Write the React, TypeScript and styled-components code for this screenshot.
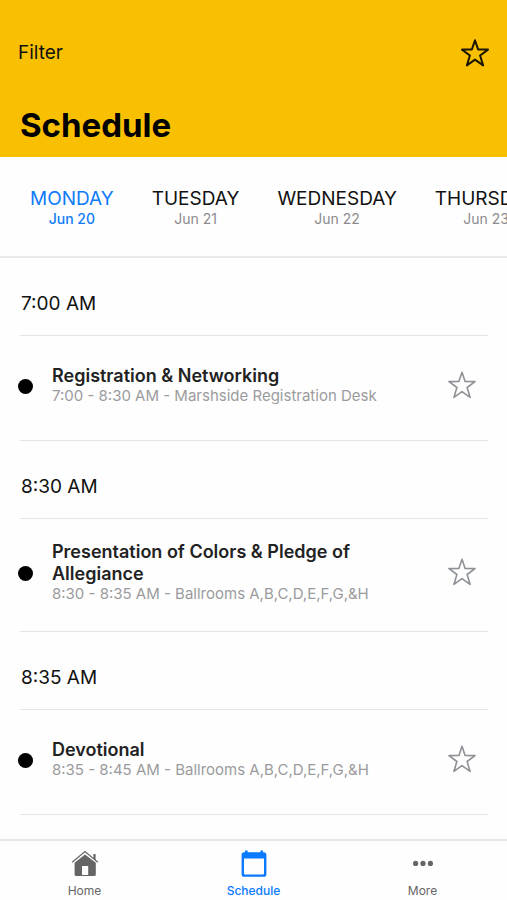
import React, { useState } from "react";
import styled, { createGlobalStyle } from "styled-components";

const GlobalStyle = createGlobalStyle`
  * { box-sizing: border-box; }
  body {
    margin: 0;
    background: #fefefe;
    color: #111;
    font-family: Inter, "Liberation Sans", sans-serif;
  }
  button { border: 0; padding: 0; background: none; color: inherit; font: inherit; cursor: pointer; }
  h1, h2, h3, p, ul { margin: 0; padding: 0; }
`;

const Page = styled.div`
  display: flex;
  flex-direction: column;
  height: 100vh;
`;

const Header = styled.header`
  flex: none;
  padding: 37px 18px 12px;
  background: #f9c002;
`;

const HeaderBar = styled.div`
  display: flex;
  align-items: center;
  justify-content: space-between;
  height: 32px;
`;

const FilterButton = styled.button`
  font-size: 19px;
  line-height: 24px;
`;

const PageTitle = styled.h1`
  margin: 36px 0 0 2px;
  font-size: 33px;
  line-height: 40px;
  font-weight: 700;
  color: #000;
`;

const IconButton = styled.button<{ $color: string }>`
  display: flex;
  flex: none;
  color: ${(p) => p.$color};
`;

const Days = styled.nav`
  display: flex;
  flex: none;
  gap: 38px;
  padding: 30px 30px 28px;
  border-bottom: 2px solid #e9e9ea;
  overflow: hidden;
`;

const DayButton = styled.button<{ $active: boolean }>`
  display: flex;
  flex: none;
  flex-direction: column;
  align-items: center;
  color: ${(p) => (p.$active ? "#0f7bf8" : "#111")};
`;

const DayName = styled.span`
  font-size: 19px;
  line-height: 23px;
`;

const DayDate = styled.span<{ $active: boolean }>`
  font-size: 14px;
  line-height: 18px;
  font-weight: ${(p) => (p.$active ? 500 : 400)};
  color: ${(p) => (p.$active ? "inherit" : "#8c8c8e")};
`;

const Agenda = styled.main`
  flex: 1;
  min-height: 0;
  padding: 0 19px 0 20px;
  overflow: hidden;
`;

const TimeHeading = styled.h2`
  padding: 34px 1px 19px;
  border-bottom: 1px solid #e4e4e5;
  font-size: 19px;
  line-height: 24px;
  font-weight: 400;
`;

const Session = styled.article`
  display: flex;
  align-items: center;
  min-height: 105px;
  padding: 22px 12px 28px 0;
  border-bottom: 1px solid #e4e4e5;
`;

const Dot = styled.span`
  flex: none;
  width: 15px;
  height: 15px;
  margin: 3px 19px 0 -2px;
  border-radius: 50%;
  background: #000;
`;

const SessionText = styled.div`
  flex: 1;
  min-width: 0;
  padding-right: 60px;
`;

const SessionTitle = styled.h3`
  font-size: 18px;
  line-height: 22px;
  font-weight: 600;
  color: #222;
`;

const SessionInfo = styled.p`
  font-size: 15px;
  line-height: 18px;
  color: #9b9b9d;
`;

const TabBar = styled.nav`
  display: flex;
  flex: none;
  height: 61px;
  border-top: 2px solid #e6e6e7;
`;

const Tab = styled.button<{ $active: boolean }>`
  display: flex;
  flex: 1;
  flex-direction: column;
  align-items: center;
  gap: 5px;
  padding-top: 9px;
  font-size: 12px;
  line-height: 16px;
  font-weight: ${(p) => (p.$active ? 500 : 400)};
  color: ${(p) => (p.$active ? "#0a7aff" : "#656565")};
`;

const Star = ({ stroke, filled }: { stroke: number; filled: boolean }) => (
  <svg width="28" height="28" viewBox="0 0 28 28" fill={filled ? "currentColor" : "none"} stroke="currentColor" strokeWidth={stroke} strokeLinejoin="round" aria-hidden="true">
    <path d="M14 1.2 17.1 10.4 27 10.6 19.1 16.5 22.1 26.4 14 20.6 5.9 26.4 8.9 16.5 1 10.6 10.9 10.4Z" />
  </svg>
);

const HomeIcon = () => (
  <svg width="28" height="28" viewBox="0 0 28 28" fill="currentColor" aria-hidden="true">
    <path fillRule="evenodd" d="M3.6 12.8 14 4.6 24.8 12.8V24.4a1.6 1.6 0 0 1-1.6 1.6H5.2a1.6 1.6 0 0 1-1.6-1.6ZM11 16v9h6.2v-9Z" />
    <path d="M1.2 12.2 14 1.6 26.8 12.2" fill="none" stroke="currentColor" strokeWidth="1.2" />
    <path d="M22.4 4h2.2v6.3l-2.2-1.8Z" />
  </svg>
);

const CalendarIcon = () => (
  <svg width="28" height="28" viewBox="0 0 28 28" fill="currentColor" aria-hidden="true">
    <path fillRule="evenodd" d="M5 .4h2.6v1.8h12.8V.4H23v1.8h.8a2.6 2.6 0 0 1 2.6 2.6v19.4a2.6 2.6 0 0 1-2.6 2.6H4.2a2.6 2.6 0 0 1-2.6-2.6V4.8a2.6 2.6 0 0 1 2.6-2.6H5ZM4 8.4v15.2c0 .5.3.8.8.8h18.4c.5 0 .8-.3.8-.8V8.4Z" />
  </svg>
);

const MoreIcon = () => (
  <svg width="28" height="28" viewBox="0 0 28 28" fill="currentColor" aria-hidden="true">
    <circle cx="6.6" cy="13.4" r="2.6" />
    <circle cx="14" cy="13.4" r="2.6" />
    <circle cx="21.4" cy="13.4" r="2.6" />
  </svg>
);

const days = [
  { name: "MONDAY", date: "Jun 20" },
  { name: "TUESDAY", date: "Jun 21" },
  { name: "WEDNESDAY", date: "Jun 22" },
  { name: "THURSDAY", date: "Jun 23" },
];

const sessions = [
  { start: "7:00 AM", title: "Registration & Networking", info: "7:00 - 8:30 AM - Marshside Registration Desk" },
  { start: "8:30 AM", title: "Presentation of Colors & Pledge of Allegiance", info: "8:30 - 8:35 AM - Ballrooms A,B,C,D,E,F,G,&H" },
  { start: "8:35 AM", title: "Devotional", info: "8:35 - 8:45 AM - Ballrooms A,B,C,D,E,F,G,&H" },
];

const tabs = [
  { label: "Home", Icon: HomeIcon },
  { label: "Schedule", Icon: CalendarIcon },
  { label: "More", Icon: MoreIcon },
];

export default function App() {
  const [day, setDay] = useState("MONDAY");
  const [tab, setTab] = useState("Schedule");
  const [starred, setStarred] = useState<string[]>([]);
  const [onlyStarred, setOnlyStarred] = useState(false);

  const toggle = (title: string) =>
    setStarred((list) => (list.includes(title) ? list.filter((t) => t !== title) : [...list, title]));

  return (
    <Page>
      <GlobalStyle />
      <Header>
        <HeaderBar>
          <FilterButton>Filter</FilterButton>
          <IconButton $color="#1c1600" aria-label="Show favorites" aria-pressed={onlyStarred} onClick={() => setOnlyStarred(!onlyStarred)}>
            <Star stroke={2} filled={onlyStarred} />
          </IconButton>
        </HeaderBar>
        <PageTitle>Schedule</PageTitle>
      </Header>
      <Days aria-label="Days">
        {days.map((d) => (
          <DayButton key={d.name} $active={d.name === day} aria-pressed={d.name === day} onClick={() => setDay(d.name)}>
            <DayName>{d.name}</DayName>
            <DayDate $active={d.name === day}>{d.date}</DayDate>
          </DayButton>
        ))}
      </Days>
      <Agenda>
        {sessions
          .filter((s) => !onlyStarred || starred.includes(s.title))
          .map((s) => (
            <section key={s.title}>
              <TimeHeading>{s.start}</TimeHeading>
              <Session>
                <Dot />
                <SessionText>
                  <SessionTitle>{s.title}</SessionTitle>
                  <SessionInfo>{s.info}</SessionInfo>
                </SessionText>
                <IconButton $color="#8e9196" aria-label={`Favorite ${s.title}`} aria-pressed={starred.includes(s.title)} onClick={() => toggle(s.title)}>
                  <Star stroke={1.6} filled={starred.includes(s.title)} />
                </IconButton>
              </Session>
            </section>
          ))}
      </Agenda>
      <TabBar aria-label="Main">
        {tabs.map(({ label, Icon }) => (
          <Tab key={label} $active={label === tab} aria-current={label === tab ? "page" : undefined} onClick={() => setTab(label)}>
            <Icon />
            {label}
          </Tab>
        ))}
      </TabBar>
    </Page>
  );
}
